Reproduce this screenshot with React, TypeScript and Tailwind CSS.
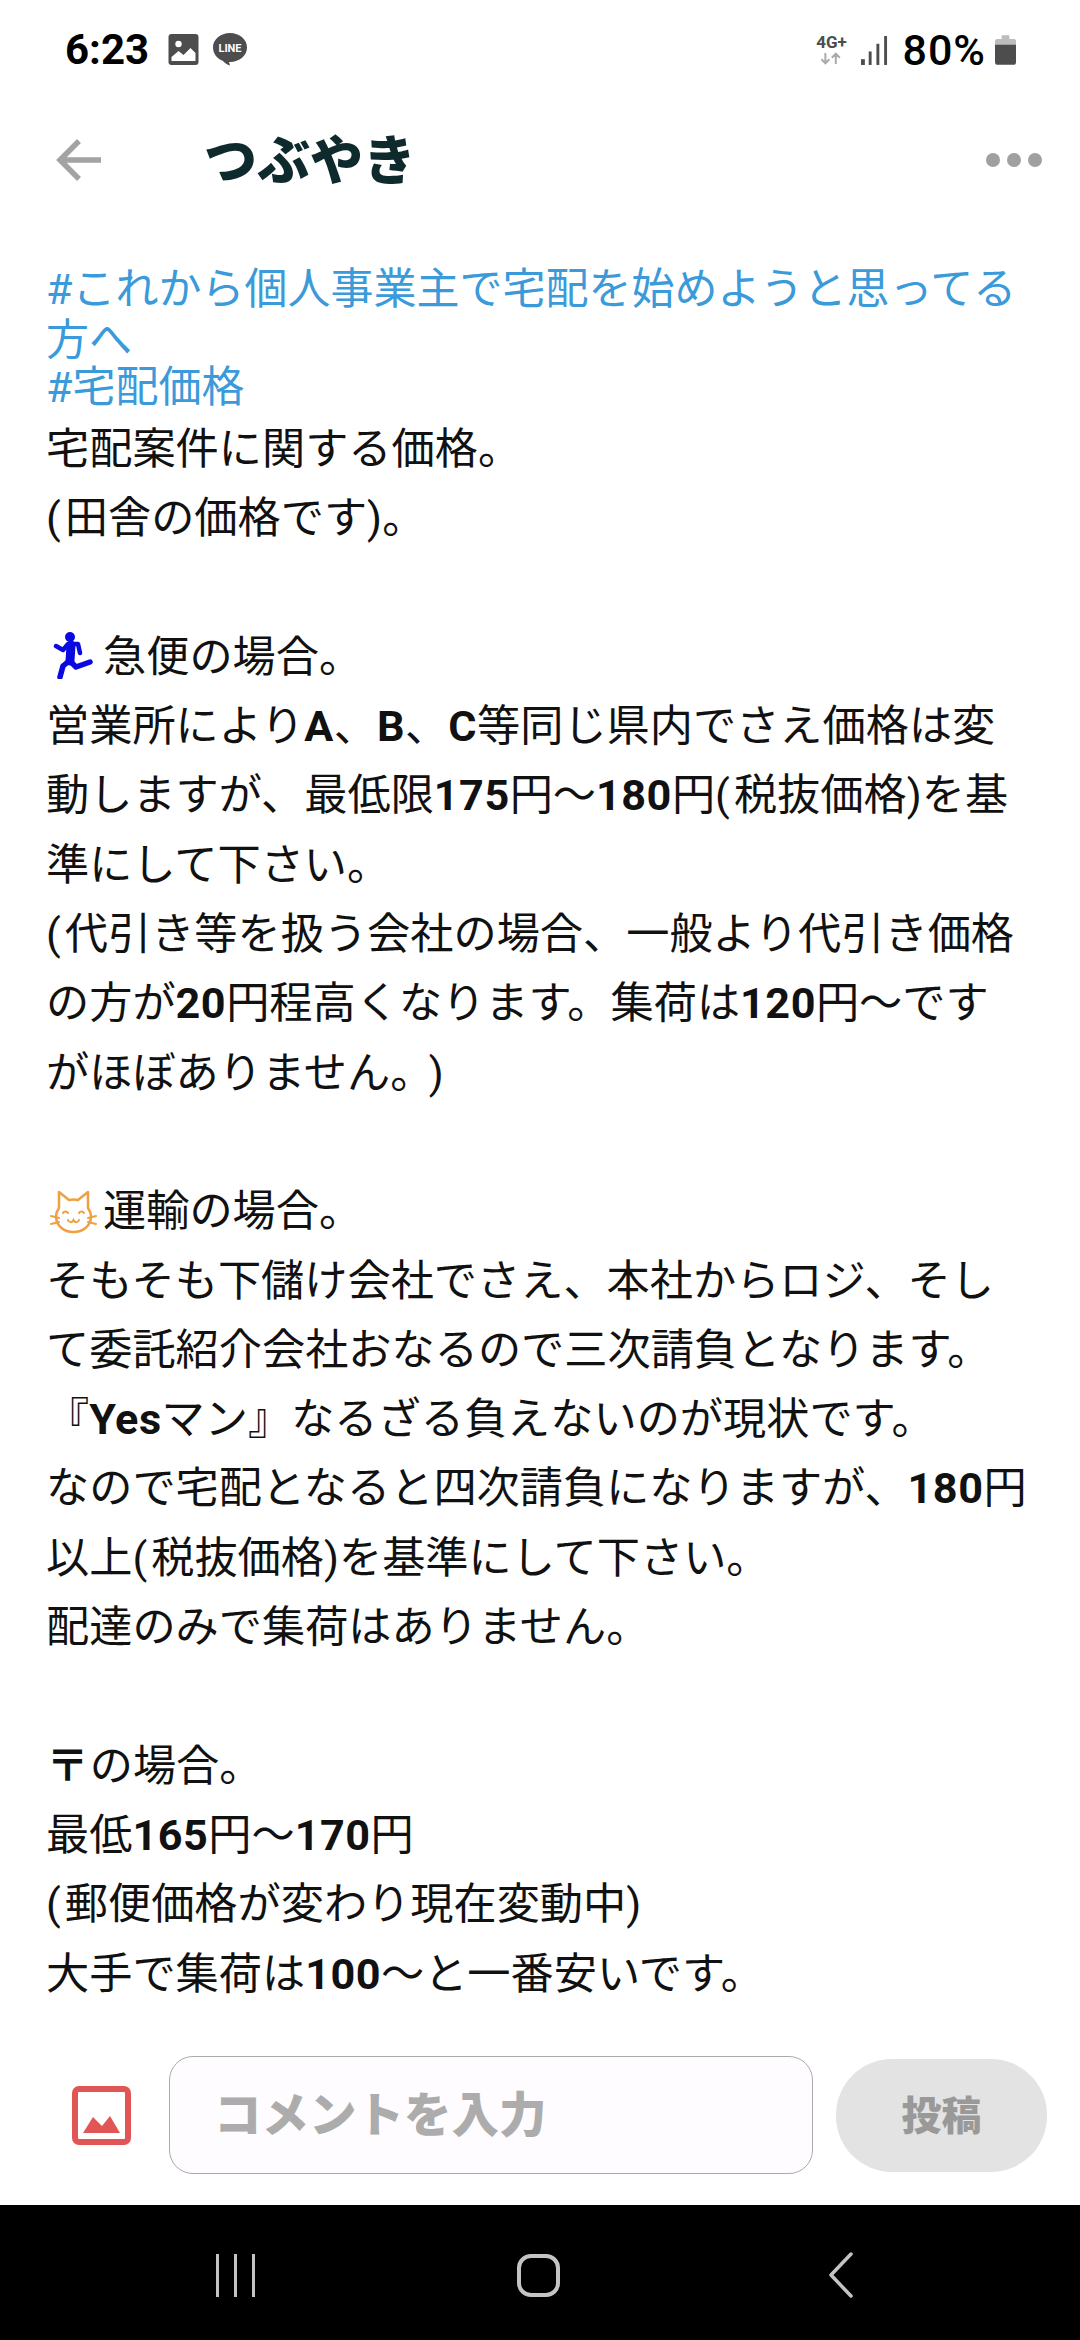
const JP = 'font-["Roboto","Noto_Sans_CJK_JP",sans-serif]';

function B({ children }: { children: string }) {
  return <span className="font-bold tracking-[0.5px]">{children}</span>;
}

function P() {
  return <span className="pr-[4px]">(</span>;
}

function Runner() {
  return (
    <svg viewBox="0 0 40 47" className="w-[40px] h-[47px] inline-block align-[-7px] ml-[7px] mr-[10px]">
      <circle cx="17" cy="5" r="5" fill="#0a0ae0" />
      <path d="M3 14l7 4 5-6h10l2 9" fill="none" stroke="#0a0ae0" strokeWidth="4.500" strokeLinecap="round" strokeLinejoin="round" />
      <path d="M18 13l-1 16" fill="none" stroke="#0a0ae0" strokeWidth="9" strokeLinecap="round" />
      <path d="M16 29l-6 5-3 11M17 29l6 6 14-5" fill="none" stroke="#0a0ae0" strokeWidth="5.500" strokeLinecap="round" strokeLinejoin="round" />
    </svg>
  );
}

function Cat() {
  return (
    <svg viewBox="0 0 47 45" className="w-[47px] h-[45px] inline-block align-[-8px] ml-[4px] mr-[6px]">
      <path d="M9 19L9 3l10 8c3-.6 6-.6 9 0l10-8v16c2 3 3 5 3 8 0 10-8 16-17.500 16S6 37 6 27c0-3 1-5 3-8z" fill="#fff" stroke="#f0a040" strokeWidth="2.500" strokeLinejoin="round" />
      <path d="M13 24c1-2 4-2 5 0M29 24c1-2 4-2 5 0M18 31c1 3 4 3 5.500 0 1.500 3 4.500 3 5.500 0M1 27l8 2M1 35l8-2M46 27l-8 2M46 35l-8-2" fill="none" stroke="#f0a040" strokeWidth="2" strokeLinecap="round" />
    </svg>
  );
}

export default function App() {
  return (
    <div className={`w-[1080px] h-[2340px] bg-white flex flex-col overflow-hidden ${JP}`}>
      <div className="h-[100px] shrink-0 flex items-center justify-between pl-[65px] pr-[64px]">
        <div className="flex items-center">
          <span className="text-[42px] font-bold text-black leading-none font-['Roboto']">6:23</span>
          <svg viewBox="0 0 30 32" className="w-[31px] h-[32px] ml-[19px]">
            <rect width="30" height="31" rx="3" fill="#4d4d4d" />
            <circle cx="10" cy="10" r="3.200" fill="#fff" />
            <path d="M3 27v-4l7-6 5 4 7-7 5 5v8z" fill="#fff" />
          </svg>
          <svg viewBox="0 0 36 36" className="w-[36px] h-[36px] ml-[13px]">
            <path d="M18 1c9.600 0 17 6.500 17 14.500 0 8-7.400 14.500-17 14.500h-1l1 3.500c-3-1-5-2-7-4.500C5.500 27 1 22 1 15.500 1 7.500 8.400 1 18 1z" fill="#4d4d4d" />
            <text x="18" y="20" textAnchor="middle" fontSize="11" fontWeight="700" fill="#fff" fontFamily="Roboto">LINE</text>
          </svg>
        </div>
        <div className="flex items-center">
          <div className="flex flex-col items-center w-[34px] mr-[13px]">
            <span className="text-[17px] font-bold text-[#4d4d4d] leading-[17px] font-['Roboto']">4G+</span>
            <svg viewBox="0 0 30 16" className="w-[24px] h-[15px]">
              <path d="M8 1v13M3 9l5 5 5-5M21 15V2M16 7l5-5 5 5" fill="none" stroke="#aaa" strokeWidth="2.500" />
            </svg>
          </div>
          <svg viewBox="0 0 28 30" className="w-[27px] h-[29px]">
            <rect x="0" y="24" width="4" height="6" fill="#4d4d4d" />
            <rect x="8" y="16" width="3" height="14" fill="#4d4d4d" />
            <rect x="16" y="8" width="3" height="22" fill="#4d4d4d" />
            <rect x="24" y="0" width="3" height="30" fill="#4d4d4d" />
          </svg>
          <span className="text-[43px] font-medium text-black leading-none tracking-[1px] ml-[14px] font-['Roboto']">80%</span>
          <svg viewBox="0 0 22 31" className="w-[21px] h-[30px] ml-[9px]">
            <path d="M7 0h8v4h5a2 2 0 012 2v5H0V6a2 2 0 012-2h5z" fill="#bdbdbd" />
            <path d="M0 10h22v18a3 3 0 01-3 3H3a3 3 0 01-3-3z" fill="#4d4d4d" />
          </svg>
        </div>
      </div>

      <div className="h-[120px] shrink-0 flex items-center pl-[56px] pr-[38px]">
        <svg viewBox="0 0 46 46" className="w-[46px] h-[46px]">
          <path d="M45 23H4M23 4L4 23l19 19" fill="none" stroke="#a3a3a3" strokeWidth="5.500" />
        </svg>
        <span className="ml-[102px] mt-[4px] text-[53px] font-black text-[#0f2a2c] leading-none">つぶやき</span>
        <div className="ml-auto flex gap-[7px]">
          <div className="w-[14px] h-[14px] rounded-full bg-[#a0a0a0]" />
          <div className="w-[14px] h-[14px] rounded-full bg-[#a0a0a0]" />
          <div className="w-[14px] h-[14px] rounded-full bg-[#a0a0a0]" />
        </div>
      </div>

      <div className="flex-1 min-h-0 px-[46px] pt-[44px] text-[#111] overflow-hidden whitespace-nowrap">
        <div className="text-[#3b9ad9] text-[43px] leading-[51px]">
          <div>#これから個人事業主で宅配を始めようと思ってる<br />方へ</div>
          <div className="-mt-[4px]">#宅配価格</div>
        </div>
        <div className="mt-[2px] text-[43.2px] leading-[69.3px]">
          <div>宅配案件に関する価格。</div>
          <div><P />田舎の価格です)。</div>
          <div className="h-[69.3px]" />
          <div><Runner />急便の場合。</div>
          <div>営業所により<B>A</B>、<B>B</B>、<B>C</B>等同じ県内でさえ価格は変<br />動しますが、最低限<B>175</B>円～<B>180</B>円<P />税抜価格)を基<br />準にして下さい。</div>
          <div><P />代引き等を扱う会社の場合、一般より代引き価格<br />の方が<B>20</B>円程高くなります。集荷は<B>120</B>円～です<br />がほぼありません。<span className="ml-[17px]">)</span></div>
          <div className="h-[69.3px]" />
          <div><Cat />運輸の場合。</div>
          <div>そもそも下儲け会社でさえ、本社からロジ、そし<br />て委託紹介会社おなるので三次請負となります。</div>
          <div>『<B>Yes</B>マン』なるざる負えないのが現状です。</div>
          <div>なので宅配となると四次請負になりますが、<B>180</B>円<br />以上<P />税抜価格)を基準にして下さい。</div>
          <div>配達のみで集荷はありません。</div>
          <div className="h-[69.3px]" />
          <div><B>〒</B>の場合。</div>
          <div>最低<B>165</B>円～<B>170</B>円</div>
          <div><P />郵便価格が変わり現在変動中)</div>
          <div>大手で集荷は<B>100</B>～と一番安いです。</div>
        </div>
      </div>

      <div className="h-[180px] shrink-0 flex items-center pl-[72px] pr-[33px]">
        <svg viewBox="0 0 59 59" className="w-[59px] h-[59px] shrink-0">
          <rect x="3" y="3" width="53" height="53" rx="4" fill="none" stroke="#e25555" strokeWidth="6" />
          <path d="M11 47L21 31l9 9 8-10 10 17z" fill="#e25555" />
        </svg>
        <div className="ml-[38px] w-[644px] h-[118px] rounded-[24px] border border-[#aaa] bg-[#fefcfe] flex items-center pl-[44px] pt-[4px] text-[47.5px] font-black text-[#acacac] shrink-0">
          コメントを入力
        </div>
        <div className="ml-[23px] flex-1 h-[113px] rounded-[56px] bg-[#e3e3e3] flex items-center justify-center pt-[4px] text-[40px] font-black text-[#999]">
          投稿
        </div>
      </div>

      <div className="h-[135px] shrink-0 bg-black flex items-center pl-[216px] pt-[5px]">
        <div className="flex gap-[15px]">
          <div className="w-[3px] h-[43px] bg-[#c4c4c4]" />
          <div className="w-[3px] h-[43px] bg-[#c4c4c4]" />
          <div className="w-[3px] h-[43px] bg-[#c4c4c4]" />
        </div>
        <div className="ml-[262px] w-[43px] h-[43px] rounded-[14px] border-[4px] border-[#c4c4c4]" />
        <svg viewBox="0 0 28 46" className="ml-[267px] w-[28px] h-[46px]">
          <path d="M24 2L4 23l20 21" fill="none" stroke="#c4c4c4" strokeWidth="3.500" strokeLinecap="round" strokeLinejoin="round" />
        </svg>
      </div>
    </div>
  );
}
